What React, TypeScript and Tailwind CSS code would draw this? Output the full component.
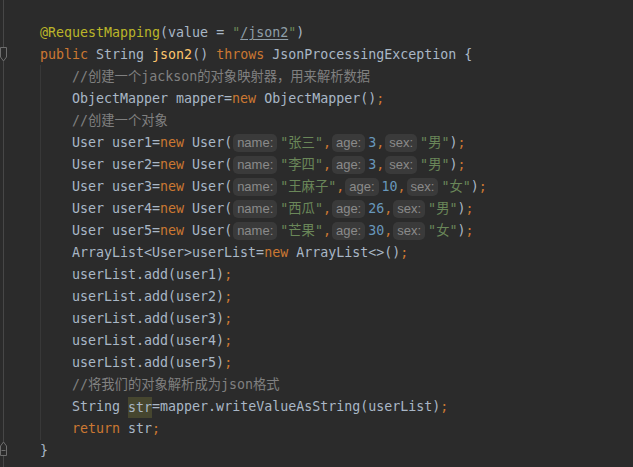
import React from "react";

const Hint = ({ label }: { label: string }) => (
  <span className="inline-flex items-center h-[18px] px-[4px] ml-[1px] mr-[3px] rounded-[5px] bg-[#3a3a3a] text-[#8a8a8a] text-[13px] font-['Liberation_Sans',sans-serif]">
    {label}
  </span>
);

const Line = ({ indent, children }: { indent?: boolean; children?: React.ReactNode }) => (
  <div className={`flex items-center h-[22px] whitespace-pre ${indent ? "pl-[32px]" : ""}`}>{children}</div>
);

const K = ({ children }: { children: React.ReactNode }) => <span className="text-[#cc7832]">{children}</span>;
const S = ({ children }: { children: React.ReactNode }) => <span className="text-[#6a8759]">{children}</span>;
const N = ({ children }: { children: React.ReactNode }) => <span className="text-[#6897bb]">{children}</span>;
const C = ({ children }: { children: React.ReactNode }) => <span className="text-[#808080]">{children}</span>;

const users = [
  { n: "user1", name: "张三", age: "3", sex: "男" },
  { n: "user2", name: "李四", age: "3", sex: "男" },
  { n: "user3", name: "王麻子", age: "10", sex: "女" },
  { n: "user4", name: "西瓜", age: "26", sex: "男" },
  { n: "user5", name: "芒果", age: "30", sex: "女" },
];

export default function App() {
  return (
    <div className="relative w-[633px] h-[467px] overflow-hidden bg-[#2b2b2b] text-[#a9b7c6] text-[13.3px] font-['DejaVu_Sans_Mono','Noto_Sans_CJK_SC',monospace]">
      {/* gutter line + fold markers */}
      <div className="absolute left-[3px] top-0 bottom-0 w-px bg-[#474747]" />
      <svg className="absolute left-0 top-[47px]" width="8" height="16" viewBox="0 0 8 16">
        <path d="M0.5 0.5 H6.5 V10 L3.5 14 L0.5 10 Z" fill="#2b2b2b" stroke="#6e6e6e" />
      </svg>
      <svg className="absolute left-0 top-[440px]" width="8" height="16" viewBox="0 0 8 16">
        <path d="M0.5 15.5 H6.5 V6 L3.5 2 L0.5 6 Z" fill="#2b2b2b" stroke="#6e6e6e" />
        <path d="M1.5 10.5 H5.5" stroke="#6e6e6e" />
      </svg>
      {/* indent guide */}
      <div className="absolute left-[40px] top-[65px] h-[375px] w-px bg-[#383838]" />

      <div className="pl-[40px] pt-[22px]">
        <Line>
          <span className="text-[#bbb529]">@RequestMapping</span>(value = <S>"</S>
          <span className="text-[#8f9ea8] underline underline-offset-2">/json2</span>
          <S>"</S>)
        </Line>
        <Line>
          <K>public </K>String <span className="text-[#ffc66d]">json2</span>() <K>throws </K>JsonProcessingException {"{"}
        </Line>
        <Line indent>
          <C>//创建一个jackson的对象映射器，用来解析数据</C>
        </Line>
        <Line indent>
          ObjectMapper mapper=<K>new </K>ObjectMapper()<K>;</K>
        </Line>
        <Line indent>
          <C>//创建一个对象</C>
        </Line>
        {users.map((u) => (
          <Line indent key={u.n}>
            User {u.n}=<K>new </K>User(
            <Hint label="name:" />
            <S>"{u.name}"</S>
            <K>,</K>
            <Hint label="age:" />
            <N>{u.age}</N>
            <K>,</K>
            <Hint label="sex:" />
            <S>"{u.sex}"</S>)<K>;</K>
          </Line>
        ))}
        <Line indent>
          ArrayList&lt;User&gt;userList=<K>new </K>ArrayList&lt;&gt;()<K>;</K>
        </Line>
        {["user1", "user2", "user3", "user4", "user5"].map((u) => (
          <Line indent key={u}>
            userList.add({u})<K>;</K>
          </Line>
        ))}
        <Line indent>
          <C>//将我们的对象解析成为json格式</C>
        </Line>
        <Line indent>
          String <span className="bg-[#46462f] leading-[21px]">str</span>=mapper.writeValueAsString(userList)<K>;</K>
        </Line>
        <Line indent>
          <K>return </K>str<K>;</K>
        </Line>
        <Line>{"}"}</Line>
      </div>
    </div>
  );
}
